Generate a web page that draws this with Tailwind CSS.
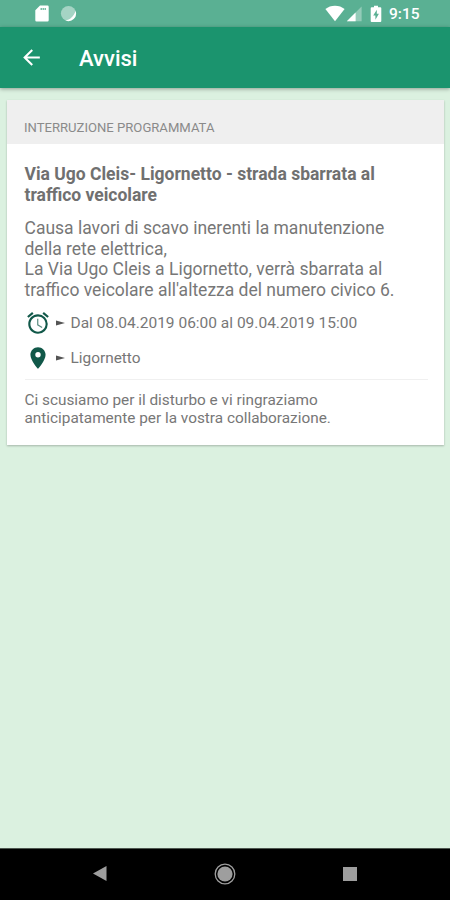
<!DOCTYPE html>
<html lang="it">
<head>
    <meta charset="UTF-8">
    <meta name="viewport" content="width=device-width, initial-scale=1.0">
    <title>Avvisi</title>
    <script src="https://cdn.jsdelivr.net/npm/@tailwindcss/browser@4"></script>
</head>
<body class="bg-[#dbf1e0] font-['Roboto',sans-serif]">

    <div class="flex flex-col w-[450px] h-[900px] overflow-hidden">

        <!-- Status bar -->
        <div class="h-[27px] shrink-0 bg-[#5ab093] flex items-center text-white">
            <svg class="ml-[35px] w-[14px] h-[17px]" viewBox="0 0 14 17" fill="currentColor">
                <path fill-rule="evenodd" d="M5 .5h7.5a1.2 1.2 0 0 1 1.2 1.2v13.6a1.2 1.2 0 0 1-1.2 1.2h-11A1.2 1.2 0 0 1 .3 15.3V5.2zM5.6 3v2h1.2V3zm2 0v2h1.2V3zm2 0v2h1.2V3z"/>
            </svg>
            <svg class="ml-[11px] w-[17px] h-[17px]" viewBox="0 0 17 17">
                <circle cx="8.5" cy="8.5" r="7.6" fill="#a5d4c4"/>
                <path d="M15.600 6A7.600 7.600 0 0 1 5.500 15.500C10 14.800 13.600 11.500 15.600 6z" fill="#fff"/>
            </svg>
            <svg class="ml-[248px] w-[20px] h-[17px]" viewBox="0 0 20 17" fill="currentColor">
                <path d="M10 16.3L.4 4.1C3 1.9 6.3.7 10 .7s7 1.2 9.6 3.4z"/>
            </svg>
            <svg class="ml-[1px] w-[17px] h-[17px]" viewBox="0 0 17 17" fill="currentColor">
                <path d="M.8 16.2L15.6 1.4v14.8z" fill-opacity=".35"/>
                <path d="M.8 16.2L9.6 7.4v8.8z"/>
            </svg>
            <svg class="ml-[7px] w-[12px] h-[18px]" viewBox="0 0 12 18">
                <path d="M4 .8h4v1.5h2.3a1 1 0 0 1 1 1v12.7a1 1 0 0 1-1 1H1.7a1 1 0 0 1-1-1V3.3a1 1 0 0 1 1-1H4z" fill="#fff"/>
                <path d="M6.8 4.8L3.2 10.5h2.2v4.2l3.5-5.900H6.800z" fill="#5ab093"/>
            </svg>
            <span class="ml-[7px] text-[15.5px] leading-[27px] pt-[2px] font-medium">9:15</span>
        </div>

        <!-- App bar -->
        <div class="h-[61px] shrink-0 bg-[#1b946e] flex items-center text-white shadow-[0_1px_4px_rgba(0,0,0,0.35)]">
            <svg class="ml-[19px] w-[25px] h-[25px]" viewBox="0 0 24 24" fill="currentColor">
                <path d="M20 11H7.83l5.59-5.590L12 4l-8 8 8 8 1.410-1.410L7.830 13H20z"/>
            </svg>
            <h1 class="ml-[35px] pt-[2px] text-[22px] font-medium">Avvisi</h1>
        </div>

        <!-- Notice card -->
        <main class="grow pt-[12px] pl-[7px] pr-[6px]">
            <article class="h-[345px] bg-white text-[#777777] shadow-[0_1px_2px_rgba(0,0,0,0.25)]">
                <div class="h-[44px] bg-[#efefef] pl-[17px] pt-[18px] text-[13.1px] leading-[20px] text-[#8a8a8a] whitespace-nowrap">INTERRUZIONE PROGRAMMATA</div>

                <div class="pl-[17.5px] pr-[16px] whitespace-nowrap">
                    <h2 class="pt-[20px] text-[17.5px] leading-[21px] font-bold text-[#707070]">
                        <span class="block w-fit">Via Ugo Cleis- Ligornetto - strada sbarrata al</span>
                        <span class="block w-fit">traffico veicolare</span>
                    </h2>
                    <p class="pt-[12px] text-[17.5px] leading-[20.7px]">
                        <span class="block w-fit">Causa lavori di scavo inerenti la manutenzione</span>
                        <span class="block w-fit">della rete elettrica,</span>
                        <span class="block w-fit">La Via Ugo Cleis a Ligornetto, verrà sbarrata al</span>
                        <span class="block w-fit">traffico veicolare all'altezza del numero civico 6.</span>
                    </p>

                    <div class="mt-[9px] h-[26px] flex items-center">
                        <svg class="w-[26px] h-[26px] text-[#115849]" viewBox="0 0 24 24" fill="currentColor">
                            <path d="M22 5.72l-4.6-3.86-1.29 1.53 4.6 3.86L22 5.72zM7.88 3.39L6.6 1.86 2 5.71l1.29 1.53 4.59-3.85zM12 4c-4.970 0-9 4.030-9 9s4.020 9 9 9a9 9 0 0 0 0-18zm0 16c-3.870 0-7-3.130-7-7s3.130-7 7-7 7 3.130 7 7-3.130 7-7 7z"/>
                            <path d="M12.3 8H11.200v6l4.300 2.700.6-1-3.800-2.300z" fill-opacity=".7"/>
                        </svg>
                        <svg class="ml-[5px] w-[9px] h-[6px]" viewBox="0 0 9 6" fill="#555"><path d="M0 .6L9 3 0 5.4z"/></svg>
                        <span class="ml-[6px] pt-[1px] text-[15.5px]">Dal 08.04.2019 06:00 al 09.04.2019 15:00</span>
                    </div>
                    <div class="mt-[9px] h-[26px] flex items-center">
                        <svg class="w-[26px] h-[26px] text-[#115849]" viewBox="0 0 24 24" fill="currentColor">
                            <path d="M12 2C8.13 2 5 5.13 5 9c0 5.25 7 13 7 13s7-7.75 7-13c0-3.87-3.13-7-7-7zm0 9.5a2.5 2.5 0 0 1 0-5 2.5 2.5 0 0 1 0 5z"/>
                        </svg>
                        <svg class="ml-[5px] w-[9px] h-[6px]" viewBox="0 0 9 6" fill="#555"><path d="M0 .6L9 3 0 5.4z"/></svg>
                        <span class="ml-[6px] pt-[1px] text-[15.4px]">Ligornetto</span>
                    </div>

                    <p class="mt-[8px] border-t border-[#f0f0f0] pt-[11px] text-[15.35px] leading-[18px]">
                        <span class="block w-fit">Ci scusiamo per il disturbo e vi ringraziamo</span>
                        <span class="block w-fit">anticipatamente per la vostra collaborazione.</span>
                    </p>
                </div>
            </article>
        </main>

        <!-- Navigation bar -->
        <div class="h-[52px] shrink-0 bg-black border-t border-[#4e5750] flex items-center text-[#9e9e9e]">
            <svg class="ml-[93px] mb-[2px] w-[14px] h-[15px]" viewBox="0 0 14 15" fill="currentColor"><path d="M0 7.5L13.5 0v15z"/></svg>
            <svg class="ml-[107px] mb-[2px] w-[22px] h-[22px]" viewBox="0 0 22 22" fill="currentColor">
                <circle cx="11" cy="11" r="9.8" fill="none" stroke="currentColor" stroke-width="1.3"/>
                <circle cx="11" cy="11" r="7.6"/>
            </svg>
            <svg class="ml-[107px] mb-[2px] w-[14px] h-[14px]" viewBox="0 0 14 14" fill="currentColor"><path d="M0 0h14v14H0z"/></svg>
        </div>
    </div>

</body>
</html>
